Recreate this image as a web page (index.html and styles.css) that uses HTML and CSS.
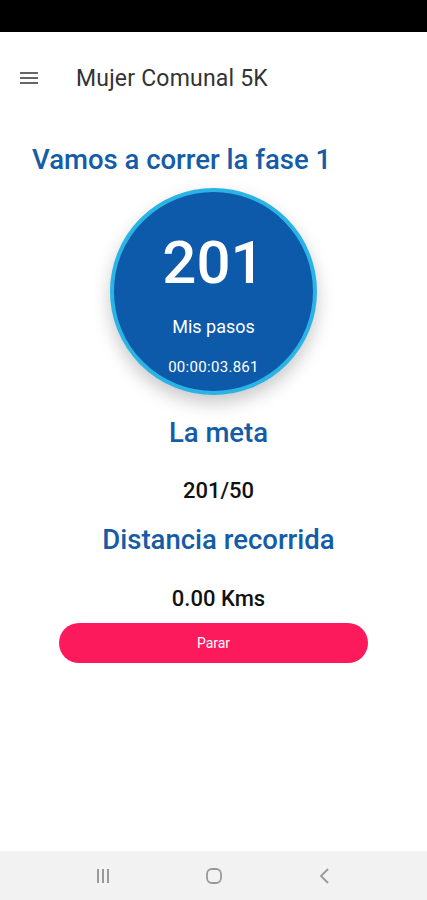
FILE: index.html
```html
<!DOCTYPE html>
<html lang="es">
<head>
<meta charset="utf-8">
<title>Mujer Comunal 5K</title>
<link rel="stylesheet" href="styles.css">
</head>
<body>
<div class="screen">
  <div class="statusbar"></div>
  <header class="appbar">
    <svg class="menu" width="20" height="14" viewBox="0 0 20 14"><rect x="1" y="1" width="18" height="2" fill="#666"/><rect x="1" y="6" width="18" height="2" fill="#666"/><rect x="1" y="11" width="18" height="2" fill="#666"/></svg>
    <span class="title">Mujer Comunal 5K</span>
  </header>
  <main class="content">
    <h1 class="phase">Vamos a correr la fase 1</h1>
    <div class="circle">
      <div class="steps">201</div>
      <div class="label">Mis pasos</div>
      <div class="timer">00:00:03.861</div>
    </div>
    <h2 class="section">La meta</h2>
    <div class="value goal">201/50</div>
    <h2 class="section dist">Distancia recorrida</h2>
    <div class="value km">0.00 Kms</div>
    <button class="stop">Parar</button>
  </main>
  <nav class="navbar">
    <svg width="20" height="20" viewBox="0 0 20 20"><rect x="4" y="3" width="2" height="14" fill="#999"/><rect x="9" y="3" width="2" height="14" fill="#999"/><rect x="14" y="3" width="2" height="14" fill="#999"/></svg>
    <svg width="20" height="20" viewBox="0 0 20 20"><rect x="3" y="3" width="14" height="14" rx="5" fill="none" stroke="#999" stroke-width="1.8"/></svg>
    <svg width="20" height="20" viewBox="0 0 20 20"><path d="M13 3 L6 10 L13 17" fill="none" stroke="#999" stroke-width="1.8"/></svg>
  </nav>
</div>
</body>
</html>
```
FILE: styles.css
```css
html, body {
  margin: 0;
  padding: 0;
  background: #fff;
}
body {
  font-family: Roboto, "Noto Sans", sans-serif;
}
.screen {
  width: 427px;
  height: 900px;
  display: flex;
  flex-direction: column;
  overflow: hidden;
}
.statusbar {
  height: 32px;
  background: #000;
  flex: none;
}
.appbar {
  height: 92px;
  display: flex;
  align-items: center;
  padding: 0 0 0 19px;
  box-sizing: border-box;
  flex: none;
}
.menu {
  display: block;
}
.title {
  margin-left: 37px;
  font-size: 23px;
  font-weight: 400;
  color: #333;
  letter-spacing: 0.2px;
}
.content {
  flex: 1;
  display: flex;
  flex-direction: column;
  align-items: center;
}
.phase {
  align-self: flex-start;
  margin: 20px 0 0 32px;
  font-size: 27.5px;
  font-weight: 500;
  color: #155ca8;
  line-height: 32px;
}
.circle {
  margin-top: 12px;
  width: 207px;
  height: 207px;
  box-sizing: border-box;
  border-radius: 50%;
  border: 4px solid #2ab4e6;
  background: #0e5aaa;
  color: #fff;
  display: flex;
  flex-direction: column;
  align-items: center;
  box-shadow: 0 8px 18px rgba(0,0,0,0.22);
}
.steps {
  margin-top: 36px;
  font-size: 60px;
  font-weight: 500;
  line-height: 70px;
}
.label {
  margin-top: 19px;
  font-size: 18px;
  line-height: 20px;
}
.timer {
  margin-top: 21px;
  font-size: 15px;
  line-height: 18px;
  letter-spacing: 0.3px;
}
.section {
  margin: 22px 0 0;
  padding-left: 10px;
  font-size: 27.5px;
  font-weight: 500;
  color: #155ca8;
  line-height: 32px;
}
.value {
  padding-left: 10px;
  font-size: 22px;
  font-weight: 500;
  color: #111;
  line-height: 24px;
}
.goal {
  margin-top: 30px;
}
.dist {
  margin-top: 21px;
}
.km {
  margin-top: 31px;
}
.stop {
  margin-top: 12px;
  width: 309px;
  height: 40px;
  border: none;
  border-radius: 20px;
  background: #fd1a5c;
  color: #fff;
  font-family: Roboto, sans-serif;
  font-size: 14px;
}
.navbar {
  height: 49px;
  flex: none;
  background: #f2f2f2;
  display: flex;
  justify-content: center;
  align-items: center;
  gap: 91px;
}
.navbar svg {
  display: block;
}
```
